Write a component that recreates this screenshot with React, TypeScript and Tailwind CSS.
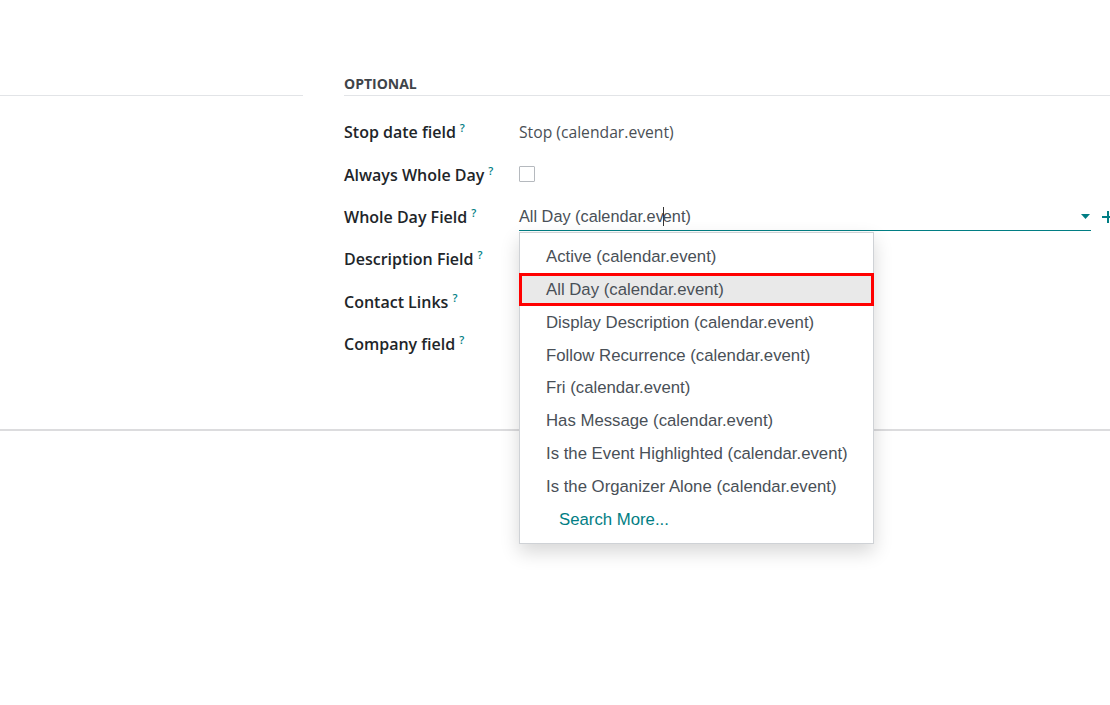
import React from 'react';

const options = [
  'Active (calendar.event)',
  'All Day (calendar.event)',
  'Display Description (calendar.event)',
  'Follow Recurrence (calendar.event)',
  'Fri (calendar.event)',
  'Has Message (calendar.event)',
  'Is the Event Highlighted (calendar.event)',
  'Is the Organizer Alone (calendar.event)',
];

function Label({ text }: { text: string }) {
  return (
    <div className="w-[175px] shrink-0 text-[16px] font-semibold text-[#212529]">
      {text}
      <sup className="ml-[4px] text-[11px] font-semibold text-[#017e84] relative -top-[6px]">?</sup>
    </div>
  );
}

function Row({ label, children }: { label: string; children?: React.ReactNode }) {
  return (
    <div className="flex h-[42.4px] items-center">
      <Label text={label} />
      <div className="flex-1 min-w-0">{children}</div>
    </div>
  );
}

function FieldSelect() {
  return (
    <div className="relative w-[572px]">
      <div className="flex h-[28px] items-center border-b border-[#017e84] text-[16.3px] text-[#495057] font-['Liberation_Sans',sans-serif]">
        <span className="flex-1">
          All Day (calendar.ev
          <span className="inline-block w-px h-[19px] bg-[#333] align-[-4px] -mx-px" />
          ent)
        </span>
        <svg width="9" height="5" viewBox="0 0 9 5" className="mr-[1px]">
          <path d="M0 0h9L4.5 5z" fill="#017e84" />
        </svg>
      </div>
      <svg width="12" height="12" viewBox="0 0 12 12" className="absolute -right-[23px] top-[8px]">
        <path d="M5 0h2v5h5v2H7v5H5V7H0V5h5z" fill="#017e84" />
      </svg>
      <div className="absolute left-0 top-full mt-[1px] w-[355px] border border-[#cfd2d6] bg-white py-[7px] shadow-[0_8px_18px_rgba(0,0,0,0.16)] font-['Liberation_Sans',sans-serif] text-[16.75px] text-[#495057] z-10">
        {options.map((o, i) => (
          <div
            key={o}
            className={
              'relative flex h-[32.9px] items-center pl-[26px] ' + (i === 1 ? 'bg-[#e9e9e9]' : '')
            }
          >
            {o}
            {i === 1 && (
              <span className="absolute -left-px -right-px inset-y-0 border-[3px] border-[#ff0000]" />
            )}
          </div>
        ))}
        <div className="flex h-[32.9px] items-center pl-[39px] text-[#017e84]">Search More...</div>
      </div>
    </div>
  );
}

export default function App() {
  return (
    <div className="h-[705px] w-[1110px] overflow-hidden bg-white font-['Open_Sans',sans-serif]">
      <div className="flex pt-[73px]">
        <div className="w-[303px] shrink-0">
          <div className="h-[23px] border-b border-[#e2e4e7]" />
        </div>
        <div className="ml-[41px] flex-1">
          <div className="h-[23px] border-b border-[#e2e4e7] text-[14px] font-bold leading-[22px] text-[#3f4449]">
            OPTIONAL
          </div>
          <div className="pt-[15px] pb-[64px]">
            <Row label="Stop date field">
              <span className="text-[15.7px] text-[#4a4f55]">Stop (calendar.event)</span>
            </Row>
            <Row label="Always Whole Day">
              <span className="block h-[16px] w-[16px] border border-[#b5b9be] rounded-[1px] -mt-[2px]" />
            </Row>
            <Row label="Whole Day Field">
              <FieldSelect />
            </Row>
            <Row label="Description Field" />
            <Row label="Contact Links" />
            <Row label="Company field" />
          </div>
        </div>
      </div>
      <div className="h-[2px] bg-[#dcdcde]" />
    </div>
  );
}
